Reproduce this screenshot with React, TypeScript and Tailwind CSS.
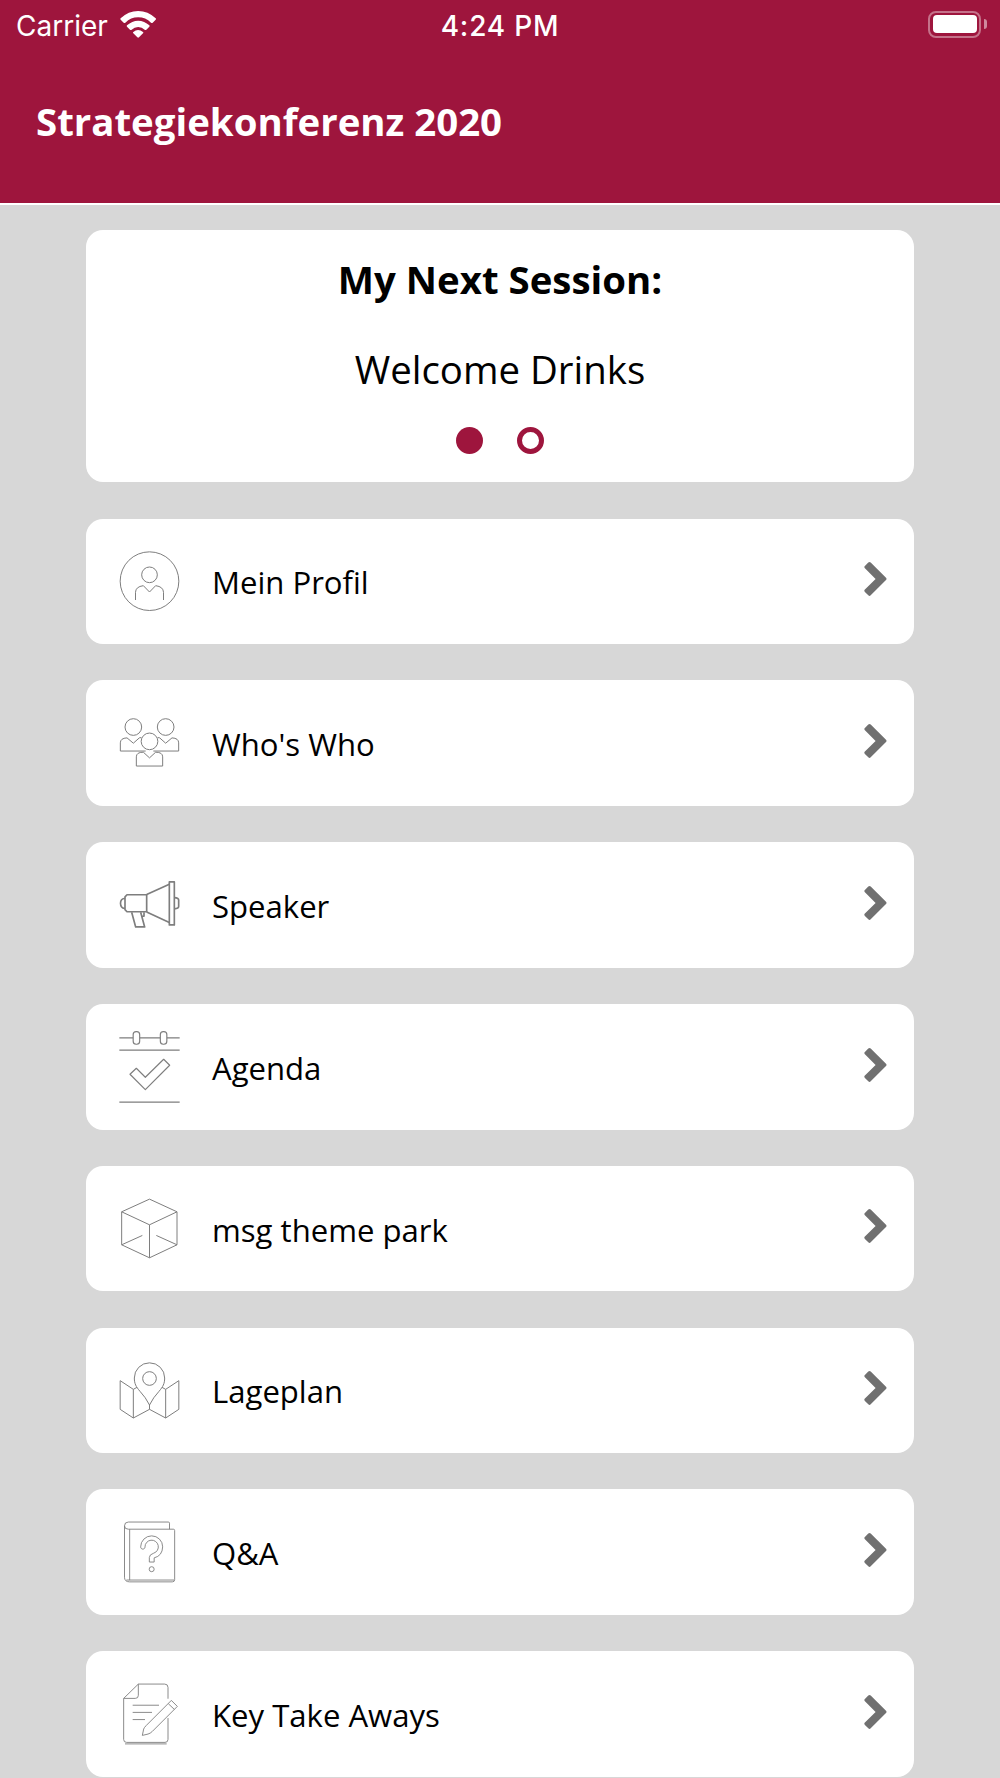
import type { ReactNode } from "react";

function RowIcon({ top, width = 3, children }: { top: number; width?: number; children: ReactNode }) {
  return (
    <svg
      viewBox={`114 ${top} 192 376.5`}
      className="h-full w-16 shrink-0"
      fill="none"
      stroke="#7e7e7e"
      strokeWidth={width}
      strokeLinejoin="round"
    >
      {children}
    </svg>
  );
}

const items: { label: string; icon: ReactNode }[] = [
  {
    label: "Mein Profil",
    icon: (
      <RowIcon top={26}>
        <circle cx="208.5" cy="212.5" r="88" />
        <circle cx="208.5" cy="193.5" r="23.5" />
        <path d="M166.500 269V246Q167 229 190 226L208.500 245L227 226Q250 229 250.500 246V269" />
      </RowIcon>
    ),
  },
  {
    label: "Who's Who",
    icon: (
      <RowIcon top={31.4}>
        <circle cx="160" cy="172.500" r="25" />
        <circle cx="257" cy="172.500" r="25" />
        <circle cx="208.500" cy="215.500" r="25" />
        <path d="M184 204L178 205L160 221L141 205Q121 206 121 220V244.500H197" />
        <path d="M233 204L239 205L257 221L276 205Q296 206 296 220V244.500H220" />
        <path d="M169 289.500V262Q169 248 190 248L208.500 265L227 248Q248 248 248 262V289.500Z" />
      </RowIcon>
    ),
  },
  {
    label: "Speaker",
    icon: (
      <RowIcon top={36.2} width={5}>
        <path d="M141 194.500H200V245.500H141L135 239V201Z" />
        <path d="M135 206C117 202 117 238 135 235" />
        <path d="M200 194L268 163M200 246L268 278" />
        <path d="M268 156H283V285H268Z" />
        <path d="M283 203Q296 204 296 210V230Q296 236 283 237" />
        <path d="M155 247L167 291H194L182 247M183 259H192V247" />
      </RowIcon>
    ),
  },
  {
    label: "Agenda",
    icon: (
      <RowIcon top={12.2} width={3.5}>
        <path d="M118 114H159M180 114H240M261 114H299M118 150.500H299M118 306.500H299" />
        <rect x="159.500" y="95" width="19.500" height="38" rx="9" />
        <rect x="241" y="95" width="19.500" height="38" rx="9" />
        <path d="M150 223L169 205L196 232L251 178L269 196L196 269Z" />
      </RowIcon>
    ),
  },
  {
    label: "msg theme park",
    icon: (
      <RowIcon top={17.6}>
        <path d="M208.500 117L291 155V254L208.500 293L125 254V155ZM125 155L208.500 194L291 155M208.500 194V293M125 254L187 226M291 254L229 226" />
      </RowIcon>
    ),
  },
  {
    label: "Lageplan",
    icon: (
      <RowIcon top={23}>
        <path d="M208.500 254Q197 231 180 213C168 199 163 190 163 173A45.500 45.500 0 0 1 254 173C254 190 249 199 237 213Q220 231 208.500 254Z" />
        <circle cx="208.500" cy="174.500" r="20.500" />
        <path d="M171 201L160 207L120.500 181V267L160 293L208.500 267L257 293L296.500 267V181L257 207L246 201M160 207V293M257 207V293M208.500 254V267" />
      </RowIcon>
    ),
  },
  {
    label: "Q&A",
    icon: (
      <RowIcon top={28.4} width={2.7}>
        <path d="M268.500 149V131Q268.500 127.500 265 127.500H145Q133.500 127.500 133.500 139V293Q133.500 307 149 307H277Q284 307 284 300V153Q284 149 280 149H145Q133.500 149 133.500 139M149 149V302M139 301.500H283" />
        <path d="M195 202A20 20 0 1 1 221 221Q208 225 208 234V247.500H222.500V235Q247 229 248 202A33 33 0 0 0 182 202C182 211 195 211 195 202Z" />
        <circle cx="215" cy="269" r="7.500" />
      </RowIcon>
    ),
  },
  {
    label: "Key Take Aways",
    icon: (
      <RowIcon top={33.8} width={2.7}>
        <path d="M264 177V143Q264 133 254 133H175L131 176V299Q131 308 140 308H255Q264 308 264 299V235M175 133V167Q175 176 166 176H131M135 312.500H260" />
        <path d="M158 196.500H237M158 218H216M158 239.500H195" />
        <path d="M274 182L292 200L217 275Q211 281 204 283L187 287L191 268Q192 264 199 257ZM265 192L283 209" />
      </RowIcon>
    ),
  },
];

function Chevron() {
  return (
    <svg viewBox="0 0 23 36" className="mb-[4.5px] h-9 w-[23px]" fill="#707070">
      <path d="M.9 4.900L4.300 1.500Q5.500.3 6.700 1.500L22 16.800Q23 17.900 22 19L6.700 34.300Q5.500 35.500 4.300 34.300L.9 30.900Q-.3 29.700.9 28.500L11.600 17.900L.9 7.300Q-.3 6.100.9 4.900Z" />
    </svg>
  );
}

export default function App() {
  return (
    <div className="flex h-[1778px] w-[1000px] flex-col overflow-hidden bg-[#d7d7d7] font-['Open_Sans',sans-serif] text-black">
      <header className="h-[205px] shrink-0 border-b-2 border-white bg-[#9e153d] text-white">
        <div className="grid h-[51px] grid-cols-3 items-center font-['Inter',sans-serif] text-[28px] leading-none">
          <div className="flex items-center pl-4">
            <span className="w-[93px] whitespace-nowrap">Carrier</span>
            <svg viewBox="348 28 108 84" className="mb-[3px] ml-[11px] h-7 w-9 shrink-0" fill="white">
              <path d="M350 53Q373 31 402.500 31T455 53Q457 55 455 57L446 66Q444 68 441 66Q425 50 402.500 50T364 66Q361 68 359 66L350 57Q348 55 350 53Z" />
              <path d="M369 74Q384 60 402.500 60T436 74Q438 76 436 78L427 87Q425 89 422 87Q414 79 402.500 79T383 87Q380 89 378 87L369 78Q367 76 369 74Z" />
              <path d="M388 94Q402 82 417 94Q419 96 417 98L405 110Q402.500 112 400 110L388 98Q386 96 388 94Z" />
            </svg>
          </div>
          <span className="text-center font-medium tracking-[0.8px]">4:24 PM</span>
          <div className="mb-[3px] flex items-center justify-end gap-[3px] pr-[13px]">
            <div className="h-[27px] w-[53px] rounded-[8px] border-2 border-white/40 p-[2.5px]">
              <div className="h-full w-full rounded-[4px] bg-white" />
            </div>
            <div className="h-[10px] w-[3px] rounded-r-full bg-white/50" />
          </div>
        </div>
        <h1 className="mt-[43px] pl-9 text-[38.4px] leading-[54px] font-bold">Strategiekonferenz 2020</h1>
      </header>

      <main className="mx-auto mt-[24.5px] flex w-[828px] flex-col gap-[36.3px]">
        <section className="flex h-[252.900px] shrink-0 flex-col items-center rounded-[17px] bg-white">
          <h2 className="mt-[22px] text-[38.4px] leading-[54px] font-bold">My Next Session:</h2>
          <p className="mt-[36px] text-[38.4px] leading-[54px]">Welcome Drinks</p>
          <div className="mt-[31px] flex gap-[33.500px]">
            <span className="size-[27px] rounded-full bg-[#9e153d]" />
            <span className="size-[27px] rounded-full border-[5px] border-[#9e153d]" />
          </div>
        </section>

        {items.map(({ label, icon }) => (
          <div key={label} className="flex h-[125.5px] shrink-0 items-center rounded-[17px] bg-white pr-[27px] pl-8">
            {icon}
            <span className="mt-[2px] ml-[30px] flex-1 text-[31.1px] leading-[42px]">{label}</span>
            <Chevron />
          </div>
        ))}
      </main>
    </div>
  );
}
